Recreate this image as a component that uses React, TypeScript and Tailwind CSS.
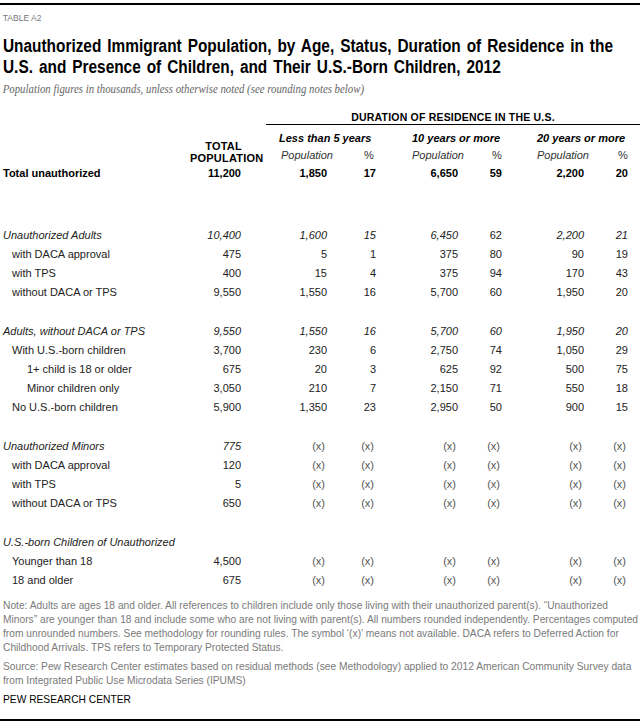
import React from "react";

type Row =
  | { kind: "spacer"; h: string }
  | {
      kind: "row";
      label: string;
      indent?: 0 | 1 | 2;
      style?: "bold" | "italic";
      values?: string[];
      uprightIdx?: number[];
    };

const X = ["(x)", "(x)", "(x)", "(x)", "(x)", "(x)"];

const rows: Row[] = [
  { kind: "row", label: "Total unauthorized", style: "bold", values: ["11,200", "1,850", "17", "6,650", "59", "2,200", "20"] },
  { kind: "spacer", h: "h-[43px]" },
  { kind: "row", label: "Unauthorized Adults", style: "italic", values: ["10,400", "1,600", "15", "6,450", "62", "2,200", "21"], uprightIdx: [4] },
  { kind: "row", label: "with DACA approval", indent: 1, values: ["475", "5", "1", "375", "80", "90", "19"] },
  { kind: "row", label: "with TPS", indent: 1, values: ["400", "15", "4", "375", "94", "170", "43"] },
  { kind: "row", label: "without DACA or TPS", indent: 1, values: ["9,550", "1,550", "16", "5,700", "60", "1,950", "20"] },
  { kind: "spacer", h: "h-[20px]" },
  { kind: "row", label: "Adults, without DACA or TPS", style: "italic", values: ["9,550", "1,550", "16", "5,700", "60", "1,950", "20"] },
  { kind: "row", label: "With U.S.-born children", indent: 1, values: ["3,700", "230", "6", "2,750", "74", "1,050", "29"] },
  { kind: "row", label: "1+ child is 18 or older", indent: 2, values: ["675", "20", "3", "625", "92", "500", "75"] },
  { kind: "row", label: "Minor children only", indent: 2, values: ["3,050", "210", "7", "2,150", "71", "550", "18"] },
  { kind: "row", label: "No U.S.-born children", indent: 1, values: ["5,900", "1,350", "23", "2,950", "50", "900", "15"] },
  { kind: "spacer", h: "h-[20px]" },
  { kind: "row", label: "Unauthorized Minors", style: "italic", values: ["775", ...X], uprightIdx: [1, 2, 3, 4, 5, 6] },
  { kind: "row", label: "with DACA approval", indent: 1, values: ["120", ...X] },
  { kind: "row", label: "with TPS", indent: 1, values: ["5", ...X] },
  { kind: "row", label: "without DACA or TPS", indent: 1, values: ["650", ...X] },
  { kind: "spacer", h: "h-[20px]" },
  { kind: "row", label: "U.S.-born Children of Unauthorized", style: "italic" },
  { kind: "row", label: "Younger than 18", indent: 1, values: ["4,500", ...X] },
  { kind: "row", label: "18 and older", indent: 1, values: ["675", ...X] },
];

const body = { fontFamily: '"Liberation Sans", Arial, sans-serif' };
const serif = { fontFamily: '"Liberation Serif", "DejaVu Serif", serif' };

function DataRow({ r }: { r: Extract<Row, { kind: "row" }> }) {
  const indentCls = r.indent === 2 ? "pl-[27px]" : r.indent === 1 ? "pl-[12px]" : "pl-[3px]";
  const styleCls = r.style === "bold" ? "font-bold text-black" : r.style === "italic" ? "italic" : "";
  const vals = r.values ?? [];
  return (
    <div className="grid h-[19px] grid-cols-[190px_51px_86px_49px_82px_44px_82px_44px] items-center text-[11px] leading-[19px] text-[#222]">
      <div className={`${indentCls} ${styleCls} whitespace-nowrap`}>{r.label}</div>
      {vals.map((v, i) => {
        const upright = r.uprightIdx?.includes(i);
        const isX = v === "(x)";
        const cls = [
          "text-right",
          r.style === "bold" ? "font-bold text-black" : "",
          r.style === "italic" && !upright ? "italic" : "",
          isX ? "text-[#555] pr-[2px]" : "",
        ].join(" ");
        return (
          <div key={i} className={cls}>
            {v}
          </div>
        );
      })}
    </div>
  );
}

function Group({ title, popW, first }: { title: string; popW: string; first?: boolean }) {
  return (
    <div className="flex flex-col">
      <div className="mt-[6px] h-[14px] whitespace-nowrap text-[11px] font-bold italic leading-[14px] text-black">
        {title}
      </div>
      <div className="mt-[3px] flex h-[14px] text-[11px] italic leading-[14px] text-[#333]">
        <span className={`${popW} ${first ? "pl-[2px]" : ""}`}>Population</span>
        <span className="not-italic">%</span>
      </div>
    </div>
  );
}

function NoteLine({ children, extra = "" }: { children: React.ReactNode; extra?: string }) {
  return (
    <div className={`h-[14px] origin-left scale-x-[0.93] whitespace-nowrap ${extra}`}>{children}</div>
  );
}

export default function App() {
  return (
    <div className="w-[640px] overflow-hidden bg-white" style={body}>
      <div className="mt-[3px] h-[2px] bg-black" />
      <div className="mt-[7px] h-[12px] origin-left scale-x-[0.9] pl-[3px] text-[9.5px] leading-[12px] text-[#7a7a7a]">
        TABLE A2
      </div>
      <h1 className="mt-[12px] pl-[3px] text-[18px] font-bold leading-[21px] text-black">
        <div className="origin-left scale-x-[0.855] whitespace-nowrap [word-spacing:2px]">
          Unauthorized Immigrant Population, by Age, Status, Duration of Residence in the
        </div>
        <div className="origin-left scale-x-[0.855] whitespace-nowrap [word-spacing:2px]">
          U.S. and Presence of Children, and Their U.S.-Born Children, 2012
        </div>
      </h1>
      <div
        className="mt-[3px] h-[16px] origin-left scale-x-[0.9] whitespace-nowrap pl-[3px] text-[12px] italic leading-[16px] text-[#666]"
        style={serif}
      >
        Population figures in thousands, unless otherwise noted (see rounding notes below)
      </div>

      {/* header */}
      <div className="mt-[14px] flex items-end">
        <div className="w-[190px] shrink-0" />
        <div className="flex w-[67px] shrink-0 flex-col text-center text-[11px] font-bold leading-[12px] tracking-[0.2px] text-black">
          <span>TOTAL</span>
          <span>POPULATION</span>
        </div>
        <div className="flex flex-1 flex-col">
          <div className="ml-[9px] h-[14px] border-b-[1.5px] border-black text-center text-[10.5px] font-bold leading-[13px] tracking-[0.2px] text-black">
            DURATION OF RESIDENCE IN THE U.S.
          </div>
          <div className="flex pb-[2px] pl-[22px]">
            <div className="w-[133px] shrink-0">
              <Group title="Less than 5 years" popW="w-[85px]" first />
            </div>
            <div className="w-[125px] shrink-0">
              <Group title="10 years or more" popW="w-[80px]" />
            </div>
            <div className="flex-1">
              <Group title="20 years or more" popW="w-[81px]" />
            </div>
          </div>
        </div>
      </div>

      {/* body */}
      <div className="flex flex-col">
        {rows.map((r, i) =>
          r.kind === "spacer" ? <div key={i} className={r.h} /> : <DataRow key={i} r={r} />
        )}
      </div>

      {/* notes */}
      <div className="mt-[8px] pl-[3px] text-[11px] leading-[14px] text-[#7a7a7a]">
        <NoteLine>
          Note: Adults are ages 18 and older. All references to children include only those living with their unauthorized parent(s). “Unauthorized
        </NoteLine>
        <NoteLine>
          Minors” are younger than 18 and include some who are not living with parent(s). All numbers rounded independently. Percentages computed
        </NoteLine>
        <NoteLine>
          from unrounded numbers. See methodology for rounding rules. The symbol ‘(x)’ means not available. DACA refers to Deferred Action for
        </NoteLine>
        <NoteLine>Childhood Arrivals. TPS refers to Temporary Protected Status.</NoteLine>
        <NoteLine extra="mt-[5px]">
          Source: Pew Research Center estimates based on residual methods (see Methodology) applied to 2012 American Community Survey data
        </NoteLine>
        <NoteLine>from Integrated Public Use Microdata Series (IPUMS)</NoteLine>
        <NoteLine extra="mt-[5px] text-black">PEW RESEARCH CENTER</NoteLine>
      </div>
      <div className="mt-[13px] h-[1.5px] bg-black" />
      <div className="h-[2px]" />
    </div>
  );
}
